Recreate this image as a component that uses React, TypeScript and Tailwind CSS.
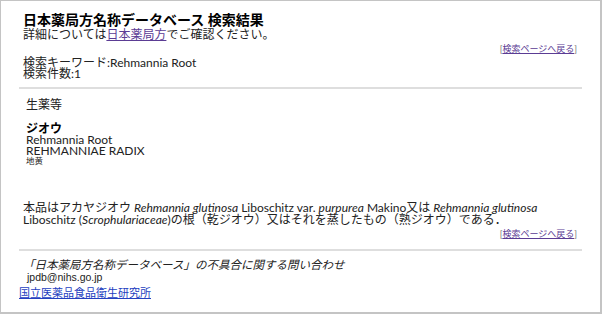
const jp = "font-['Lato','Noto_Sans_CJK_JP',sans-serif]"

function BackLink() {
  return (
    <div className="flex justify-end pr-[23px] text-[9px] leading-[11px] text-[#777]">
      [<a href="#" className="text-[#5b3c94] underline">検索ページへ戻る</a>]
    </div>
  )
}

export default function App() {
  return (
    <div className={`w-[602px] h-[314px] bg-white border-t border-l border-r-2 border-b-2 border-[#c4c4c4] text-[#222] ${jp}`}>
      {/* Header */}
      <div className="pl-[22px] pt-[10px]">
        <h1 className="text-[14px] leading-[17px] font-bold text-black">日本薬局方名称データベース 検索結果</h1>
        <p className="text-[12px] leading-[13px]">
          詳細については<a href="#" className="text-[#5b3c94] underline">日本薬局方</a>でご確認ください。
        </p>
      </div>
      <div className="mt-[2px]">
        <BackLink />
      </div>
      <div className="pl-[22px] mt-[3px] text-[12px] leading-[11px]">
        <div>検索キーワード:Rehmannia Root</div>
        <div>検索件数:1</div>
      </div>
      <hr className="mx-[18px] mt-[8px] border-0 h-[2px] bg-[#dedede]" />

      {/* Result */}
      <div className="pl-[25px] mt-[9px]">
        <div className="text-[12px] leading-[13px]">生薬等</div>
        <div className="mt-[12px] text-[12px] leading-[11px]">
          <div className="font-bold text-black">ジオウ</div>
          <div>Rehmannia Root</div>
          <div>REHMANNIAE RADIX</div>
          <div className="text-[8.5px] leading-[11px]">地黄</div>
        </div>
      </div>
      <p className="pl-[22px] pr-[40px] mt-[35px] text-[12px] leading-[12px]">
        本品はアカヤジオウ <i>Rehmannia glutinosa</i> Liboschitz var. <i>purpurea</i> Makino又は <i>Rehmannia glutinosa</i> Liboschitz (<i>Scrophulariaceae</i>)の根（乾ジオウ）又はそれを蒸したもの（熟ジオウ）である．
      </p>
      <div className="mt-[2px]">
        <BackLink />
      </div>
      <hr className="mx-[18px] mt-[10px] border-0 h-[2px] bg-[#dedede]" />

      {/* Footer */}
      <div className="pl-[22px] mt-[7px]">
        <div className="italic text-[11.5px] leading-[13px]">「日本薬局方名称データベース」の不具合に関する問い合わせ</div>
        <div className="pl-[4px] text-[10.5px] leading-[12px] font-['Liberation_Sans',sans-serif]">jpdb@nihs.go.jp</div>
      </div>
      <a href="#" className="block pl-[18px] mt-[3px] text-[11px] leading-[13px] text-[#2440c0] underline">国立医薬品食品衛生研究所</a>
    </div>
  )
}
